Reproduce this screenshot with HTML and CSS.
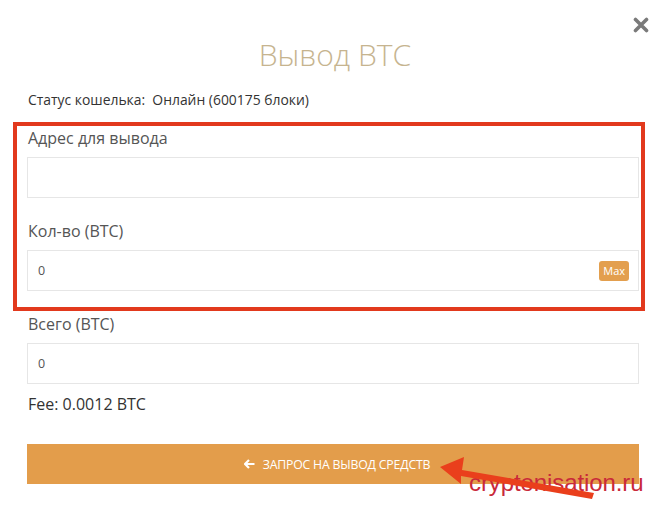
FILE: index.html
```html
<!DOCTYPE html>
<html lang="ru">
<head>
<meta charset="utf-8">
<title>Вывод BTC</title>
<link rel="stylesheet" href="styles.css">
</head>
<body>
<div class="modal">
  <button class="close" aria-label="Закрыть">
    <svg width="16" height="16" viewBox="0 0 16 16"><path d="M2.5 2.5 L13.5 13.5 M13.5 2.5 L2.5 13.5" stroke="#7a7a7a" stroke-width="3.6" stroke-linecap="round"/></svg>
  </button>
  <h1 class="title">Вывод BTC</h1>
  <p class="status">Статус кошелька:&nbsp; Онлайн (600175 блоки)</p>

  <div class="highlight">
    <div class="group">
      <label class="label">Адрес для вывода</label>
      <div class="input"></div>
    </div>
    <div class="group last">
      <label class="label">Кол-во (BTC)</label>
      <div class="input"><span class="value">0</span><span class="max">Max</span></div>
    </div>
  </div>

  <div class="group total">
    <label class="label">Всего (BTC)</label>
    <div class="input"><span class="value">0</span></div>
  </div>

  <p class="fee">Fee: 0.0012 BTC</p>

  <button class="submit">
    <svg width="11" height="10" viewBox="0 0 11 10"><path d="M5 1 L1 5 L5 9 M1.5 5 H10.5" stroke="#fff" stroke-width="2.2" fill="none" stroke-linejoin="miter"/></svg>
    <span>Запрос на вывод средств</span>
  </button>

  <span class="watermark">cryptonisation.ru</span>
  <svg class="pointer" width="660" height="507" viewBox="0 0 660 507">
    <polygon points="440,467 464,457 462,470 594,493 592,499 461,476 461,484" fill="#ea3f1c"/>
  </svg>
</div>
</body>
</html>
```

FILE: styles.css
```css
* { box-sizing: border-box; }
html, body { margin: 0; padding: 0; background: #fff; }
body { font-family: "Open Sans", "Noto Sans", sans-serif; color: #333; }

.modal {
  position: relative;
  width: 660px;
  height: 507px;
  padding: 34px 21px 0 27px;
}

.close {
  position: absolute;
  top: 17px;
  left: 633px;
  padding: 0;
  border: 0;
  background: none;
  line-height: 0;
}

.title {
  margin: 0;
  font-weight: 300;
  font-size: 30px;
  line-height: 42px;
  text-align: center;
  color: #c6b48f;
  padding-left: 4px;
}

.status {
  margin: 14px 0 0 1px;
  font-size: 13.9px;
  line-height: 20px;
  color: #333;
}

.highlight {
  margin: 12px -6px 2px -14px;
  border: 4px solid #e2391d;
  padding: 1px 2px 0 10px;
}

.group { margin-bottom: 22px; }
.group.last { margin-bottom: 16px; }
.group.total { margin-bottom: 9px; }

.label {
  display: block;
  font-size: 16px;
  line-height: 22px;
  color: #555;
  margin-bottom: 8px;
  padding-left: 1px;
}

.input {
  height: 41px;
  border: 1px solid #e6e6e6;
  display: flex;
  align-items: center;
  justify-content: space-between;
  padding: 0 9px 0 10px;
}

.value {
  font-size: 12.5px;
  color: #555;
}

.max {
  background: #e39f4e;
  color: #fff;
  font-size: 11px;
  line-height: 20px;
  padding: 0 4px;
  border-radius: 3px;
}

.fee {
  margin: 0;
  font-size: 16px;
  line-height: 22px;
  color: #333;
  padding-left: 1px;
}

.submit {
  margin-top: 29px;
  width: 612px;
  height: 40px;
  border: 0;
  background: #e39d4b;
  color: #fff;
  font-family: inherit;
  font-size: 12.3px;
  text-transform: uppercase;
  letter-spacing: -0.2px;
  display: flex;
  align-items: center;
  justify-content: center;
  gap: 8px;
  padding: 0 0 0 8px;
}

.watermark {
  position: absolute;
  left: 469px;
  top: 471px;
  font-family: "Liberation Sans", Arial, sans-serif;
  font-size: 24px;
  line-height: 24px;
  color: #c9293a;
  letter-spacing: -0.1px;
}

.pointer {
  position: absolute;
  left: 0;
  top: 0;
  pointer-events: none;
}
```
